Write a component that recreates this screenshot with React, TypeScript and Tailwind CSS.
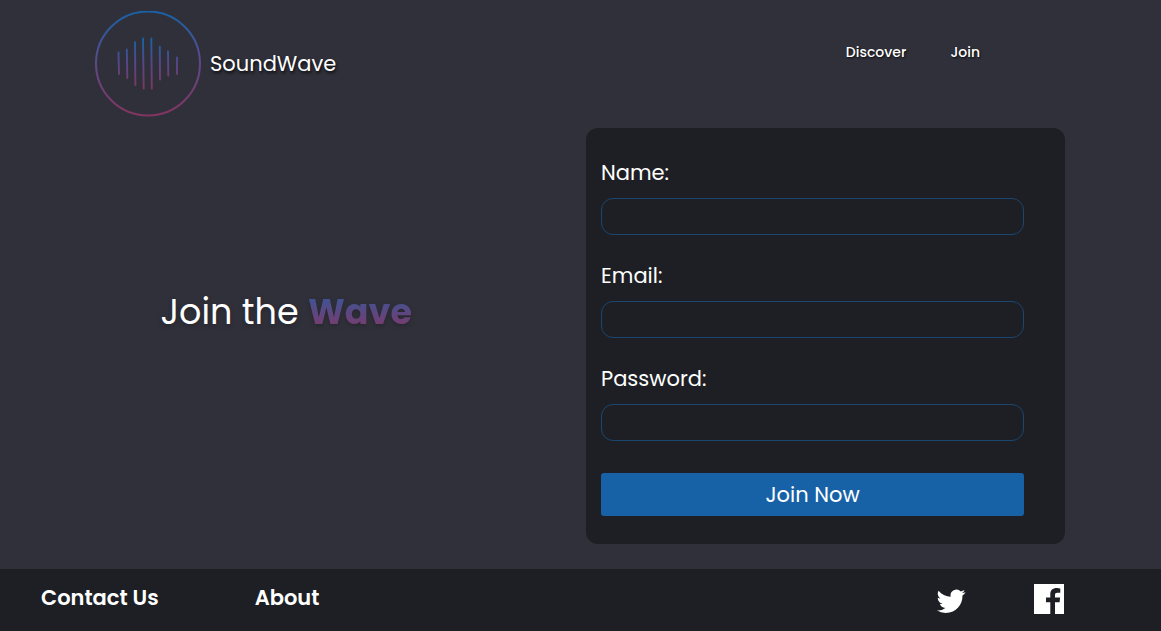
import React from "react";

const bars: [number, number, number, number][] = [
  [23.5, 41.5, 24, 63],
  [31.8, 38.5, 32.3, 67],
  [40, 31.3, 40.4, 74],
  [48, 27.5, 48.7, 77.5],
  [56.3, 27.5, 56.8, 77.5],
  [64.8, 35.8, 65, 68.5],
  [73, 40.5, 73.3, 64.5],
  [82, 46.5, 82, 63],
];

function Logo() {
  return (
    <svg className="size-[106px] shrink-0" viewBox="0 0 106 106" fill="none" aria-hidden="true">
      <defs>
        <linearGradient id="ring" gradientUnits="userSpaceOnUse" x1="0" y1="0" x2="0" y2="106">
          <stop stopColor="#1762a7" />
          <stop offset="0.5" stopColor="#5f4888" />
          <stop offset="1" stopColor="#83345f" />
        </linearGradient>
        <linearGradient id="bars" gradientUnits="userSpaceOnUse" x1="0" y1="28" x2="0" y2="79">
          <stop stopColor="#1762a7" />
          <stop offset="0.5" stopColor="#5a4588" />
          <stop offset="1" stopColor="#83345f" />
        </linearGradient>
      </defs>
      <circle cx="53" cy="52.5" r="52" stroke="url(#ring)" strokeWidth="2" />
      {bars.map(([x1, y1, x2, y2]) => (
        <path
          key={x1}
          d={`M${x1} ${y1}L${x2} ${y2}`}
          stroke="url(#bars)"
          strokeWidth="1.9"
          strokeLinecap="round"
        />
      ))}
    </svg>
  );
}

function TwitterIcon() {
  return (
    <svg className="size-[30px]" viewBox="-0.5 -2.4 25 25" fill="currentColor" aria-hidden="true">
      <path d="M23.95 4.57a10 10 0 0 1-2.82.77 4.96 4.96 0 0 0 2.16-2.72c-.95.55-2 .95-3.13 1.18a4.92 4.92 0 0 0-8.38 4.48C7.69 8.1 4.07 6.13 1.64 3.16a4.92 4.92 0 0 0 1.52 6.57 4.9 4.9 0 0 1-2.23-.61v.06c0 2.38 1.7 4.37 3.95 4.82a5 5 0 0 1-2.21.09 4.94 4.94 0 0 0 4.6 3.42A9.87 9.87 0 0 1 0 19.54a14 14 0 0 0 7.55 2.21c9.05 0 14-7.5 14-13.98 0-.21 0-.42-.02-.63a9.94 9.94 0 0 0 2.46-2.55z" />
    </svg>
  );
}

function FacebookIcon() {
  return (
    <svg className="size-[30px]" viewBox="0 0 30 30" fill="currentColor" aria-hidden="true">
      <path d="M0 0h30v30h-9V18.2h4.6l.5-4.6H21v-2.4c0-1.7.7-2.4 2.3-2.4h3V4.4a18 18 0 0 0-3.6-.3c-4 0-6.4 2.2-6.4 6.1v3.4H12v4.6h4.3V30H0z" />
    </svg>
  );
}

function Field({ id, label, type }: { id: string; label: string; type: string }) {
  return (
    <div>
      <label htmlFor={id} className="mb-2 block text-[21px] leading-[34px]">
        {label}
      </label>
      <input
        id={id}
        type={type}
        className="block h-[37px] w-full rounded-xl border border-[#1b466f] bg-transparent px-3 text-base outline-none focus:border-[#1762a7]"
      />
    </div>
  );
}

export default function App() {
  return (
    <div className="flex min-h-screen flex-col bg-[#30303a] font-[Poppins,Inter,sans-serif] text-white">
      <header className="flex justify-between pt-[11px] pr-[181px] pl-[95px]">
        <a href="#home" className="flex items-center gap-[9px]">
          <Logo />
          <span className="text-[21px] leading-8 [text-shadow:1px_2px_3px_#0b0b0e]">SoundWave</span>
        </a>
        <nav className="flex gap-11 pt-[31px] text-sm leading-5 font-medium [text-shadow:1px_1px_2px_#0b0b0e]">
          <a href="#discover">Discover</a>
          <a href="#join">Join</a>
        </nav>
      </header>

      <main className="grid grow grid-cols-2 pt-[11px] pr-24 pb-[25px]">
        <div className="flex items-center justify-center pb-12 pl-10">
          <h1 className="text-[35px] leading-[54px] whitespace-nowrap">
            <span className="[text-shadow:0_2px_4px_#25252d]">Join the </span>
            <strong className="bg-[linear-gradient(#2a5ca2,#8a3462)] bg-clip-text font-bold text-transparent drop-shadow-[0_2px_2px_#26262e]">
              Wave
            </strong>
          </h1>
        </div>
        <form
          className="ml-auto w-full max-w-[479px] self-start rounded-xl bg-[#1e1f24] pt-7 pr-[41px] pb-7 pl-[15px]"
          onSubmit={(event) => event.preventDefault()}
        >
          <div className="grid gap-6">
            <Field id="name" label="Name:" type="text" />
            <Field id="email" label="Email:" type="email" />
            <Field id="password" label="Password:" type="password" />
          </div>
          <button
            type="submit"
            className="mt-8 block h-[43px] w-full cursor-pointer rounded-[3px] bg-[#1762a7] text-[21px] leading-8"
          >
            Join Now
          </button>
        </form>
      </main>

      <footer className="flex justify-between bg-[#1e1f24] pt-[13px] pr-[97px] pb-[17px] pl-[41px]">
        <div className="flex gap-24 text-[21px] leading-8 font-semibold">
          <a href="#contact">Contact Us</a>
          <a href="#about">About</a>
        </div>
        <div className="flex gap-[68px] pt-[2px]">
          <a href="#twitter" aria-label="Twitter">
            <TwitterIcon />
          </a>
          <a href="#facebook" aria-label="Facebook">
            <FacebookIcon />
          </a>
        </div>
      </footer>
    </div>
  );
}
